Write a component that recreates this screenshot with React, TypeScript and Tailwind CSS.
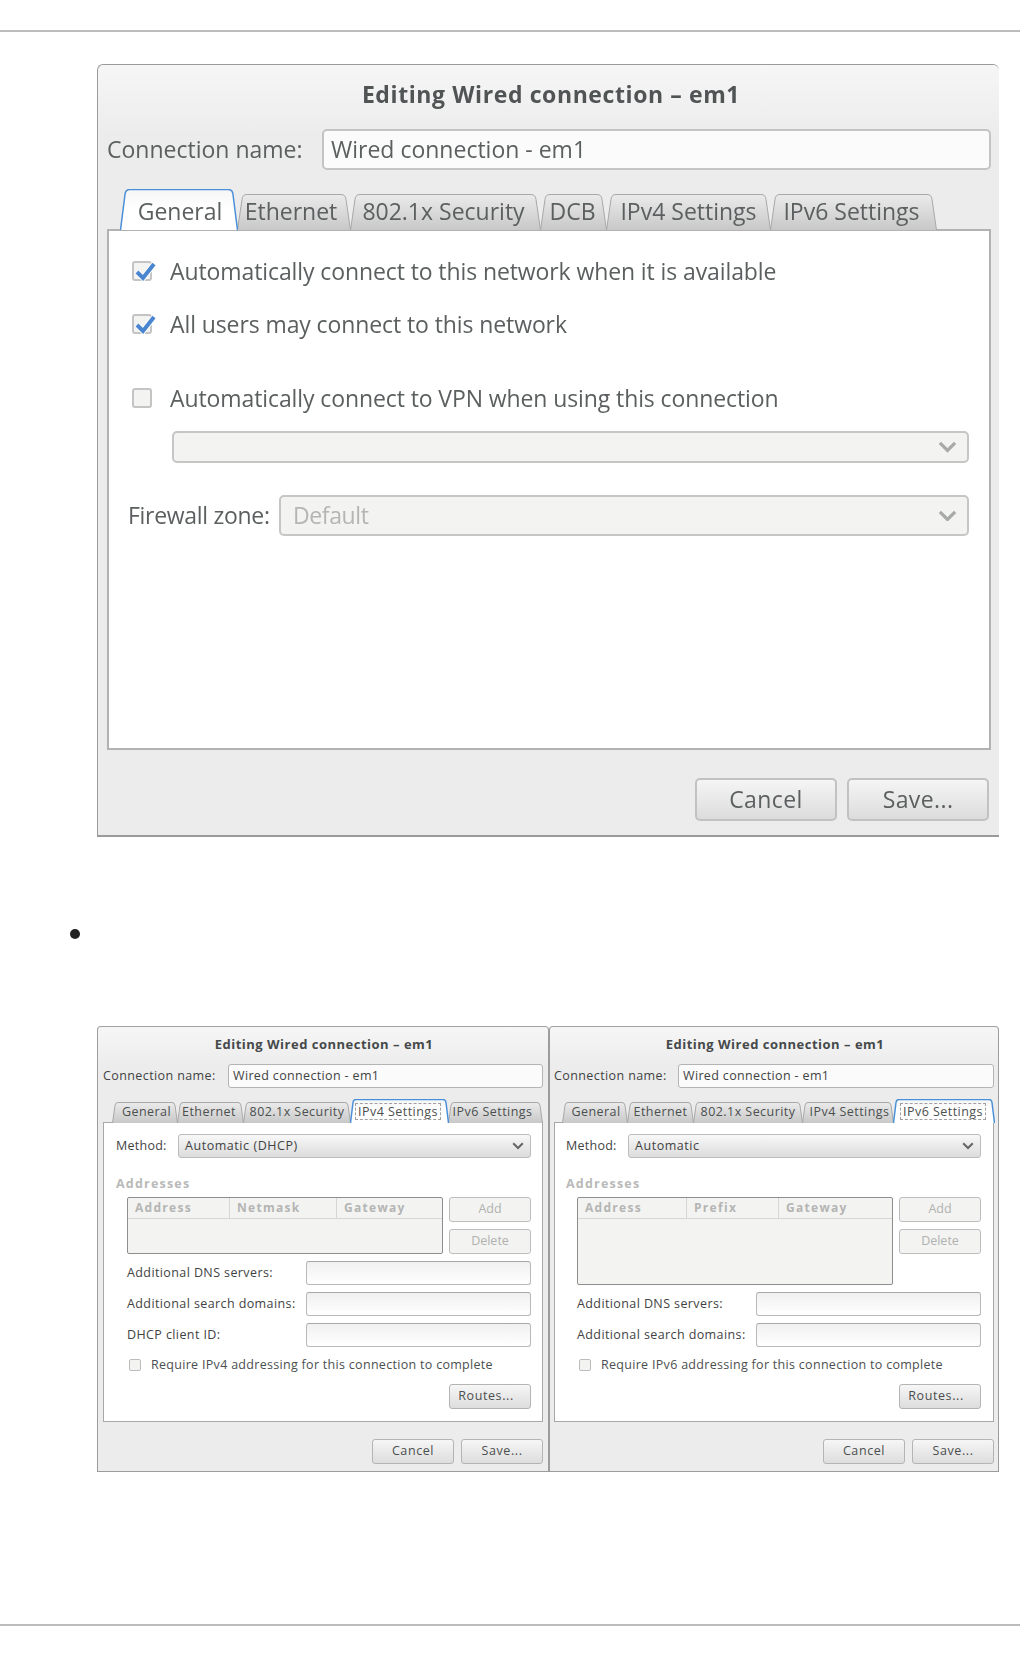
import React from 'react';

const font = "[font-family:'Open_Sans','Noto_Sans',sans-serif]";

function Chevron({ size, color }: { size: number; color: string }) {
  return (
    <svg width={size} height={size * 0.6} viewBox="0 0 20 12" className="shrink-0">
      <polyline points="2,2 10,10 18,2" fill="none" stroke={color} strokeWidth="3.4" />
    </svg>
  );
}

function Check() {
  return (
    <svg width="24" height="22" viewBox="0 0 24 22" className="absolute -top-[2px] -left-[1px]">
      <path d="M4 11 L10 17 L21 3" fill="none" stroke="#fff" strokeWidth="6" />
      <path d="M4 11 L10 17 L21 3" fill="none" stroke="#4a86cf" strokeWidth="4" />
    </svg>
  );
}

function BigCheck({ checked, label }: { checked?: boolean; label: string }) {
  return (
    <div className="flex items-center gap-[18px] h-[30px]">
      <div className="relative w-[20px] h-[20px] rounded-[3px] border-2 border-[#c4c4c4] bg-[#f3f3f1] shrink-0">
        {checked && <Check />}
      </div>
      <span className="text-[23px] text-[#5b5f5f] leading-[30px] tracking-[-0.1px]">{label}</span>
    </div>
  );
}

type TabDef = { label: string; w: number; active?: boolean; ml?: number; mr?: number };

function Tab({ tab, h, topGap, s, r, small }: { tab: TabDef; h: number; topGap: number; s: number; r: number; small?: boolean }) {
  const { w, active } = tab;
  const top = active ? 0.5 : topGap + 0.5;
  const d = `M0.5,${h} L${s},${top + r} Q${s + 0.4},${top} ${s + r},${top} L${w - s - r},${top} Q${w - s - 0.4},${top} ${w - s},${top + r} L${w - 0.5},${h}`;
  const gid = active ? 'tabActive' : 'tabIdle';
  return (
    <div
      className={`relative flex justify-center shrink-0 -ml-[1px] first:ml-0 ${active ? 'z-10' : ''}`}
      style={{ width: w, height: h }}
    >
      <svg width={w} height={h} className="absolute inset-0">
        <path d={d + ' Z'} fill={`url(#${gid})`} stroke="none" />
        <path d={d} fill="none" stroke={active ? '#4a90d9' : '#a8a8a8'} strokeWidth={active ? 1.5 : 1} />
      </svg>
      <span
        className={
          small
            ? `relative mt-[4px] h-[17px] px-[2px] text-[12.5px] leading-[15px] text-[#4b4f4f] tracking-[0.45px] whitespace-nowrap border border-dashed ${active ? 'border-[#a0a0a0]' : 'border-transparent'}`
            : 'relative mt-[8px] text-[23px] leading-[28px] text-[#5b5f5f] whitespace-nowrap'
        }
        style={{ marginLeft: tab.ml ?? 0, marginRight: tab.mr ?? 0 }}
      >
        {tab.label}
      </span>
    </div>
  );
}

function GradDefs() {
  return (
    <svg width="0" height="0" className="absolute">
      <defs>
        <linearGradient id="tabIdle" x1="0" y1="0" x2="0" y2="1">
          <stop offset="0" stopColor="#ebebeb" />
          <stop offset="1" stopColor="#c8c8c8" />
        </linearGradient>
        <linearGradient id="tabActive" x1="0" y1="0" x2="0" y2="1">
          <stop offset="0" stopColor="#f6f6f6" />
          <stop offset="0.5" stopColor="#ffffff" />
          <stop offset="1" stopColor="#ffffff" />
        </linearGradient>
      </defs>
    </svg>
  );
}

const bigTabs: TabDef[] = [
  { label: 'General', w: 118, active: true, ml: 2 },
  { label: 'Ethernet', w: 114, mr: 6 },
  { label: '802.1x Security', w: 191, mr: 4 },
  { label: 'DCB', w: 67, mr: 2 },
  { label: 'IPv4 Settings', w: 165 },
  { label: 'IPv6 Settings', w: 167, mr: 4 },
];

function BigDialog() {
  return (
    <div className="w-[902px] h-[773px] flex flex-col border border-b-2 border-r-0 border-[#9a9a9a] rounded-t-[6px] bg-gradient-to-b from-[#f6f6f6] from-0% to-[#ececec] to-[9%] blur-[0.45px]">
      <div className="h-[64px] flex items-start justify-center pt-[14px] pl-[5px]">
        <span className="text-[23px] leading-[30px] font-bold text-[#505454] tracking-[0.6px]">Editing Wired connection – em1</span>
      </div>
      <div className="flex items-center pl-[9px] pr-[8px]">
        <span className="w-[215px] pb-[2px] text-[23px] leading-[30px] text-[#5b5f5f]">Connection name:</span>
        <div className="flex-1 h-[41px] flex items-center pl-[7px] rounded-[5px] border-2 border-[#c4c4c4] bg-[#fbfbfb]">
          <span className="pb-[2px] text-[23px] leading-[30px] text-[#5b5f5f]">Wired connection - em1</span>
        </div>
      </div>
      <div className="flex ml-[22px] mt-[19px] relative z-10 -mb-[1px]">
        {bigTabs.map(t => (
          <Tab key={t.label} tab={t} h={41} topGap={5} s={5} r={5} />
        ))}
      </div>
      <div className="ml-[9px] mr-[8px] h-[521px] border-2 border-[#b2b2b2] bg-white pt-[25px] pl-[23px] pr-[20px]">
        <BigCheck checked label="Automatically connect to this network when it is available" />
        <div className="mt-[23px]">
          <BigCheck checked label="All users may connect to this network" />
        </div>
        <div className="mt-[44px]">
          <BigCheck label="Automatically connect to VPN when using this connection" />
        </div>
        <div className="ml-[40px] mt-[18px] h-[32px] flex items-center justify-end pr-[10px] rounded-[5px] border-2 border-[#c6c6c6] bg-[#f3f3f1]">
          <Chevron size={19} color="#a8aaa8" />
        </div>
        <div className="flex items-center mt-[32px] -ml-[4px]">
          <span className="w-[151px] pb-[1px] text-[23px] leading-[30px] text-[#5b5f5f] tracking-[-0.3px]">Firewall zone:</span>
          <div className="flex-1 h-[41px] flex items-center justify-between pl-[12px] pr-[10px] rounded-[5px] border-2 border-[#c6c6c6] bg-[#f3f3f1]">
            <span className="pb-[1px] text-[23px] leading-[30px] text-[#b4b6b4] tracking-[-0.4px]">Default</span>
            <Chevron size={19} color="#a8aaa8" />
          </div>
        </div>
      </div>
      <div className="flex justify-end gap-[10px] mt-[28px] pr-[10px]">
        {['Cancel', 'Save...'].map(l => (
          <div key={l} className="w-[142px] h-[43px] flex items-center justify-center rounded-[5px] border-2 border-[#c2c2c2] bg-gradient-to-b from-[#f5f5f5] to-[#dcdcdc] text-[23px] text-[#5b5f5f] tracking-[0.4px]">
            {l}
          </div>
        ))}
      </div>
    </div>
  );
}

function SmallButton({ label, disabled, pad }: { label: string; disabled?: boolean; pad?: string }) {
  return (
    <div
      className={`w-[82px] h-[25px] flex items-center justify-center rounded-[3px] border text-[12.5px] ${pad ?? ''} ${
        disabled
          ? 'border-[#bdbdbd] bg-[#f3f3f1] text-[#b0b2b0]'
          : 'border-[#b4b4b4] bg-gradient-to-b from-[#f6f6f6] to-[#dddddd] text-[#4b4f4f] tracking-[0.6px]'
      }`}
    >
      {label}
    </div>
  );
}

function SmallField({ label }: { label: string }) {
  return (
    <div className="flex items-center h-[24px]">
      <span className="w-[179px] text-[12.5px] text-[#3f4343] tracking-[0.4px]">{label}</span>
      <div className="flex-1 h-[24px] rounded-[3px] border border-[#b9b9b9] border-t-[#a8a8a8] bg-gradient-to-b from-[#f0f0f0] to-[#ffffff]" />
    </div>
  );
}

type SmallProps = {
  w: string;
  tabs: TabDef[];
  tabMargin: string;
  method: string;
  cols: { label: string; w: string }[];
  tableHeight: string;
  fields: string[];
  require: string;
  rowPad: string;
  frameMargin: string;
  framePad: string;
  labelW: string;
  buttonsPr: string;
};

function SmallDialog(p: SmallProps) {
  return (
    <div className={`${p.w} h-[446px] flex flex-col border border-[#9c9c9c] border-t-[#a0a0a0] rounded-t-[4px] bg-gradient-to-b from-[#f6f6f6] from-0% to-[#ececec] to-[9%] ${font}`}>
      <div className="h-[37px] flex justify-center items-start pt-[8px] pl-[2px]">
        <span className="text-[13px] leading-[18px] font-bold text-[#45494a] tracking-[0.5px]">Editing Wired connection – em1</span>
      </div>
      <div className={`flex items-center ${p.rowPad}`}>
        <span className={`${p.labelW} text-[12.5px] text-[#3f4343] tracking-[0.4px]`}>Connection name:</span>
        <div className="flex-1 h-[24px] flex items-center pl-[4px] rounded-[3px] border border-[#b4b4b4] bg-[#fbfbfb] text-[12.5px] text-[#3f4343] tracking-[0.35px]">
          Wired connection - em1
        </div>
      </div>
      <div className={`flex ${p.tabMargin} mt-[11px] relative z-10 -mb-[1px]`}>
        {p.tabs.map(t => (
          <Tab key={t.label} tab={t} h={24} topGap={3} s={3} r={3} small />
        ))}
      </div>
      <div className={`${p.frameMargin} ${p.framePad} h-[300px] border border-[#a8a8a8] bg-white pt-[11px]`}>
        <div className="flex items-center h-[24px]">
          <span className="w-[62px] pt-[1px] text-[12.5px] text-[#3f4343] tracking-[0.25px]">Method:</span>
          <div className="flex-1 h-[24px] flex items-center justify-between pl-[6px] pr-[6px] rounded-[3px] border border-[#bcbcbc] bg-gradient-to-b from-[#f8f8f8] to-[#dcdcdc]">
            <span className="pt-[1px] text-[12.5px] text-[#3f4343] tracking-[0.55px]">{p.method}</span>
            <Chevron size={12} color="#666" />
          </div>
        </div>
        <div className="mt-[18px] h-[15px] text-[12.5px] leading-[15px] font-bold text-[#b8b9b8] tracking-[1.2px]">Addresses</div>
        <div className="flex gap-[6px] mt-[6px] ml-[11px]">
          <div className={`${p.tableHeight} flex-1 rounded-[2px] border border-[#8e8e8e] bg-[#f3f3f1]`}>
            <div className="flex h-[21px] border-b border-[#d6d6d6]">
              {p.cols.map((c, i) => (
                <span key={c.label} className={`${c.w} flex items-center pl-[7px] text-[12px] font-bold text-[#b4b5b4] tracking-[1.3px] ${i > 0 ? 'border-l border-[#d6d6d6]' : ''}`}>
                  {c.label}
                </span>
              ))}
            </div>
          </div>
          <div className="flex flex-col gap-[7px]">
            <SmallButton label="Add" disabled />
            <SmallButton label="Delete" disabled />
          </div>
        </div>
        <div className="flex flex-col gap-[7px] mt-[7px] ml-[11px]">
          {p.fields.map(f => (
            <SmallField key={f} label={f} />
          ))}
        </div>
        <div className="flex items-center gap-[10px] mt-[10px] ml-[13px] h-[16px]">
          <div className="w-[12px] h-[12px] rounded-[2px] border border-[#bcbcbc] bg-[#f3f3f1]" />
          <span className="text-[12.5px] text-[#4b4f4f] tracking-[0.3px]">{p.require}</span>
        </div>
        <div className="flex justify-end mt-[11px]">
          <SmallButton label="Routes..." pad="pr-[8px]" />
        </div>
      </div>
      <div className={`flex justify-end gap-[7px] mt-[17px] ${p.buttonsPr}`}>
        <SmallButton label="Cancel" />
        <SmallButton label="Save..." />
      </div>
    </div>
  );
}

export default function App() {
  return (
    <div className={`w-[1020px] h-[1656px] bg-white flex flex-col ${font}`}>
      <GradDefs />
      <div className="h-[32px] border-b-2 border-[#bcbcbc] shrink-0" />
      <div className="pl-[97px] pt-[32px]">
        <BigDialog />
      </div>
      <div className="pl-[70px] mt-[92px] h-[10px]">
        <div className="w-[10px] h-[10px] rounded-full bg-[#222]" />
      </div>
      <div className="flex pl-[97px] mt-[87px]">
        <SmallDialog
          w="w-[452px]"
          tabs={[
            { label: 'General', w: 66, ml: 3 },
            { label: 'Ethernet', w: 67, mr: 3 },
            { label: '802.1x Security', w: 108 },
            { label: 'IPv4 Settings', w: 99, active: true, mr: 3 },
            { label: 'IPv6 Settings', w: 95, mr: 6 },
          ]}
          tabMargin="ml-[14px]"
          method="Automatic (DHCP)"
          cols={[
            { label: 'Address', w: 'w-[101px]' },
            { label: 'Netmask', w: 'w-[107px]' },
            { label: 'Gateway', w: 'flex-1' },
          ]}
          tableHeight="h-[57px]"
          fields={['Additional DNS servers:', 'Additional search domains:', 'DHCP client ID:']}
          require="Require IPv4 addressing for this connection to complete"
          rowPad="pl-[5px] pr-[5px]"
          frameMargin="ml-[5px] mr-[5px]"
          framePad="pl-[12px] pr-[11px]"
          labelW="w-[125px]"
          buttonsPr="pr-[5px]"
        />
        <SmallDialog
          w="w-[450px]"
          tabs={[
            { label: 'General', w: 66, ml: 2 },
            { label: 'Ethernet', w: 67 },
            { label: '802.1x Security', w: 110 },
            { label: 'IPv4 Settings', w: 92, ml: 3 },
            { label: 'IPv6 Settings', w: 102, active: true, mr: 2 },
          ]}
          tabMargin="ml-[12px]"
          method="Automatic"
          cols={[
            { label: 'Address', w: 'w-[108px]' },
            { label: 'Prefix', w: 'w-[92px]' },
            { label: 'Gateway', w: 'flex-1' },
          ]}
          tableHeight="h-[88px]"
          fields={['Additional DNS servers:', 'Additional search domains:']}
          require="Require IPv6 addressing for this connection to complete"
          rowPad="pl-[4px] pr-[4px]"
          frameMargin="ml-[4px] mr-[4px]"
          framePad="pl-[11px] pr-[12px]"
          labelW="w-[124px]"
          buttonsPr="pr-[4px]"
        />
      </div>
      <div className="mt-auto mb-[30px] border-b-2 border-[#bcbcbc]" />
    </div>
  );
}
